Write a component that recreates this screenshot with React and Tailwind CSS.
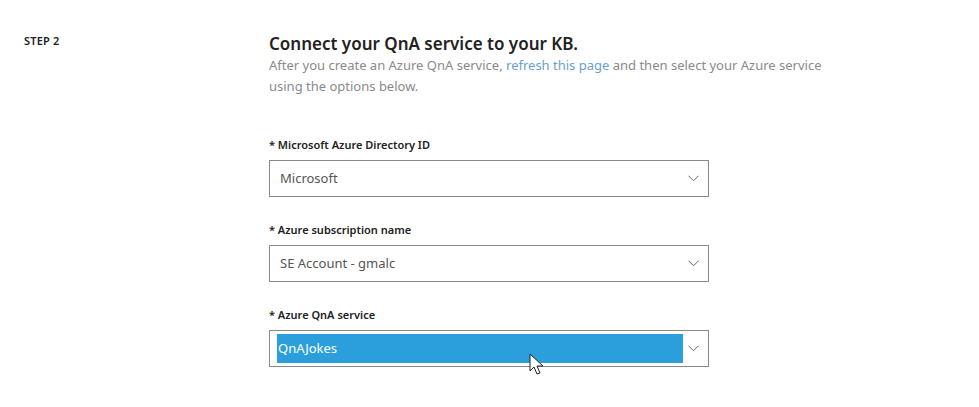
import React from 'react';

function Chevron() {
  return (
    <svg width="11" height="7" viewBox="0 0 11 7" fill="none" className="shrink-0">
      <path d="M0.5 0.75 L5.5 5.75 L10.5 0.75" stroke="#666" strokeWidth="1" />
    </svg>
  );
}

function Cursor() {
  return (
    <svg width="16" height="24" viewBox="0 0 16 24" className="absolute left-[529px] top-[353px]">
      <path
        d="M1 1 L1 18 L5 14 L8 21 L11 20 L8 13 L14 13 Z"
        fill="#fff"
        stroke="#222"
        strokeWidth="1"
        strokeLinejoin="round"
      />
    </svg>
  );
}

function Field({ label, value, selected }) {
  return (
    <div className="flex flex-col">
      <label className="text-[11px] font-semibold text-[#222] leading-[14px] mb-[8px]">{label}</label>
      <div className="w-[440px] h-[37px] border border-[#8a8a8a] bg-white flex items-center pr-[9px]">
        {selected ? (
          <div className="ml-[7px] mr-[5px] flex-1 h-[29px] bg-[#2a9fdb] flex items-center pl-[1px] text-[13px] text-white">
            {value}
          </div>
        ) : (
          <div className="flex-1 pl-[10px] text-[13px] text-[#555]">{value}</div>
        )}
        <Chevron />
      </div>
    </div>
  );
}

export default function App() {
  return (
    <div
      className="relative w-[979px] h-[407px] bg-white overflow-hidden"
      style={{ fontFamily: '"Noto Sans", "Open Sans", sans-serif' }}
    >
      <div className="flex pt-[33px]">
        <div className="w-[269px] shrink-0 pl-[24px] text-[11px] font-semibold text-[#222] tracking-[0.2px]">STEP 2</div>
        <div className="flex flex-col">
          <h2 className="text-[17px] font-semibold text-[#222] leading-[22px]">Connect your QnA service to your KB.</h2>
          <p className="text-[13px] text-[#8a8a8a] leading-[21px] w-[570px]">
            After you create an Azure QnA service, <span className="text-[#6a9fcb]">refresh this page</span> and then
            select your Azure service using the options below.
          </p>
          <div className="flex flex-col gap-[26px] mt-[41px]">
            <Field label="* Microsoft Azure Directory ID" value="Microsoft" />
            <Field label="* Azure subscription name" value="SE Account - gmalc" />
            <Field label="* Azure QnA service" value="QnAJokes" selected />
          </div>
        </div>
      </div>
      <Cursor />
    </div>
  );
}
